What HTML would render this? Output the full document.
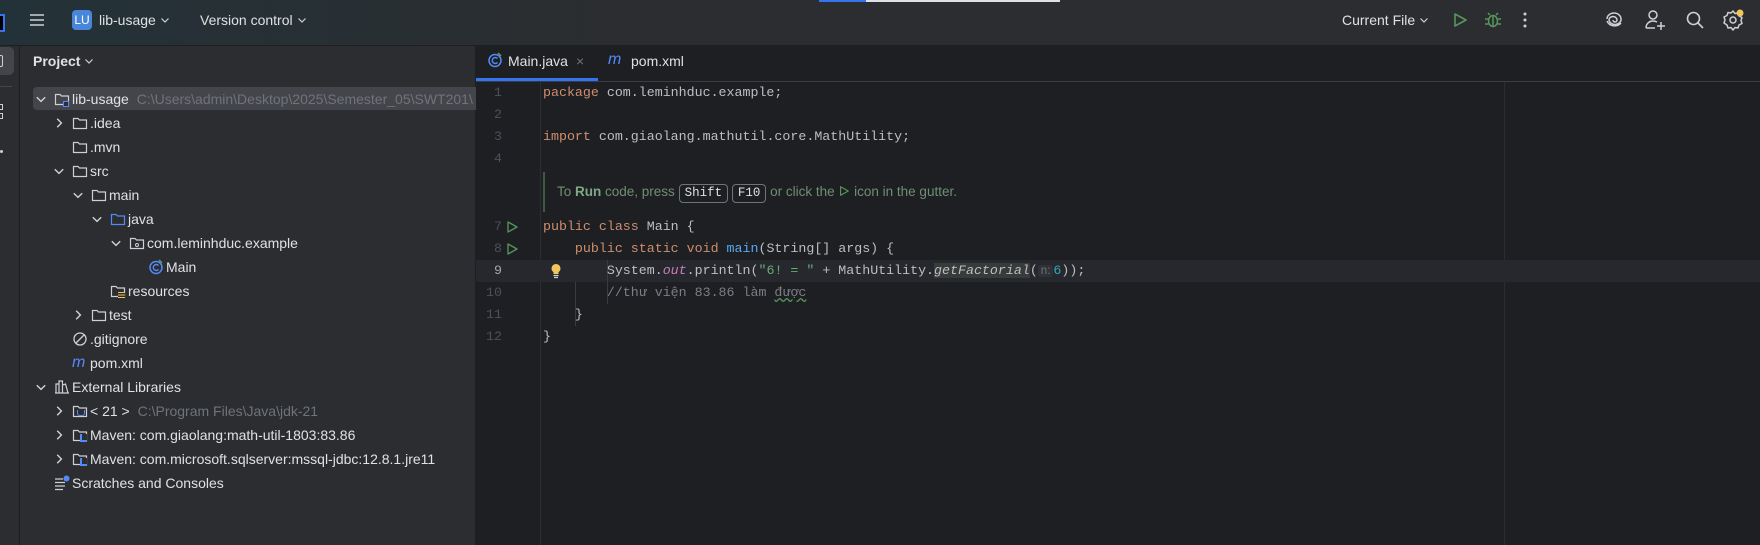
<!DOCTYPE html>
<html><head><meta charset="utf-8">
<style>
*{margin:0;padding:0;box-sizing:border-box}
body{width:1760px;height:545px;overflow:hidden;background:#1e1f22;font-family:"Liberation Sans",sans-serif;color:#dfe1e5;position:relative}
.abs{position:absolute}
.title{left:0;top:0;width:1760px;height:46px;background:linear-gradient(90deg,#233238 0%,#2b2d30 35%,#2b2d30 100%);border-bottom:1px solid #1e1f22}
.ui{font-size:14px;white-space:nowrap}
.stripe{left:0;top:46px;width:20px;height:499px;background:#2b2d30;border-right:1px solid #1e1f22}
.panel{left:20px;top:46px;width:456px;height:499px;background:#2b2d30;border-right:1px solid #1e1f22}
.row{position:absolute;height:24px;line-height:24px;font-size:14px;color:#dfe1e5;white-space:nowrap}
.gray{color:#6f737a}
.code{font-family:"Liberation Mono",monospace;font-size:13.3px;white-space:pre;color:#bcbec4;position:absolute;left:543px;height:22px;line-height:22px}
.ln{font-family:"Liberation Mono",monospace;font-size:13.3px;color:#4b5059;position:absolute;width:40px;text-align:right;left:462px;height:22px;line-height:22px}
.k{color:#cf8e6d}.s{color:#6aab73}.n{color:#2aacb8}.m{color:#56a8f5}.p{color:#c77dbb;font-style:italic}.c{color:#7a7e85}
.key{display:inline-block;border:1px solid #6f737a;border-radius:4px;padding:0 5px;line-height:17px;color:#dfe1e5;font-family:"Liberation Mono",monospace;font-size:12.5px}
.dd{display:inline-block;width:10px;height:10px;margin-left:4px;vertical-align:0}
</style></head><body>
<svg width="0" height="0" style="position:absolute"><defs>
<symbol id="fold" viewBox="0 0 16 16"><path d="M1.5 3.5h4.5l1.5 1.5h7v8.5h-13z" fill="none" stroke="#ced0d6" stroke-width="1.2"/></symbol>
<symbol id="foldb" viewBox="0 0 16 16"><path d="M1.5 3.5h4.5l1.5 1.5h7v8.5h-13z" fill="none" stroke="#548af7" stroke-width="1.2"/></symbol>
<symbol id="down" viewBox="0 0 10 10"><path d="M1.5 3.5l3.5 3.5 3.5-3.5" fill="none" stroke="#ced0d6" stroke-width="1.2"/></symbol>
<symbol id="right" viewBox="0 0 10 10"><path d="M3.5 1.5l3.5 3.5-3.5 3.5" fill="none" stroke="#ced0d6" stroke-width="1.2"/></symbol>
<symbol id="cls" viewBox="0 0 16 16"><circle cx="8" cy="8.5" r="6" fill="none" stroke="#548af7" stroke-width="1.5"/><path d="M10.5 6.5a3 3 0 1 0 0 4" fill="none" stroke="#548af7" stroke-width="1.4"/><path d="M11 1l3 3" stroke="#57965c" stroke-width="1.6"/></symbol>
<symbol id="run" viewBox="0 0 14 14"><path d="M3 2l9 5-9 5z" fill="none" stroke="#57965c" stroke-width="1.3" stroke-linejoin="round"/></symbol>
</defs></svg>
<div class="abs title"></div>
<div class="abs" style="left:819px;top:0;width:47px;height:2px;background:#3574f0"></div>
<div class="abs" style="left:866px;top:0;width:194px;height:2px;background:#dfe1e5"></div>
<div class="abs" style="left:0;top:14px;width:5px;height:18px;border:2px solid #3574f0;border-left:none;background:#000"></div>
<svg class="abs" style="left:29px;top:12px" width="16" height="16" viewBox="0 0 16 16"><path d="M1 3h14M1 8h14M1 13h14" stroke="#ced0d6" stroke-width="1.5"/></svg>
<div class="abs" style="left:72px;top:10px;width:20px;height:20px;border-radius:4px;background:#4a86d8;color:#fff;font-size:12px;line-height:20px;text-align:center">LU</div>
<div class="abs ui" style="left:99px;top:9px;line-height:22px">lib-usage<svg class="dd"><use href="#down"/></svg></div>
<div class="abs ui" style="left:200px;top:9px;line-height:22px">Version control<svg class="dd"><use href="#down"/></svg></div>
<div class="abs ui" style="left:1342px;top:9px;line-height:22px">Current File<svg class="dd"><use href="#down"/></svg></div>
<svg class="abs" style="left:1451px;top:11px" width="18" height="18" viewBox="0 0 18 18"><path d="M4 3l11 6-11 6z" fill="none" stroke="#57965c" stroke-width="1.6" stroke-linejoin="round"/></svg>
<svg class="abs" style="left:1484px;top:10px" width="18" height="20" viewBox="0 0 18 20"><ellipse cx="9" cy="11" rx="4.5" ry="5.5" fill="none" stroke="#57965c" stroke-width="1.5"/><path d="M6 5l-2-2M12 5l2-2M1 9h3.5M13.5 9H17M1 14h3.5M13.5 14H17M9 6v10" stroke="#57965c" stroke-width="1.5"/></svg>
<svg class="abs" style="left:1523px;top:11px" width="4" height="18"><circle cx="2" cy="3" r="1.5" fill="#ced0d6"/><circle cx="2" cy="9" r="1.5" fill="#ced0d6"/><circle cx="2" cy="15" r="1.5" fill="#ced0d6"/></svg>
<svg class="abs" style="left:1604px;top:10px" width="20" height="20" viewBox="0 0 20 20"><path d="M3 9a7 6 0 0 1 14 0a6 5 0 0 1-12 1a4 3.5 0 0 1 8 0a2 2 0 0 1-4 0" fill="none" stroke="#ced0d6" stroke-width="1.5"/><path d="M3 11a8 7 0 0 0 14 2" fill="none" stroke="#ced0d6" stroke-width="1.5"/></svg>
<svg class="abs" style="left:1644px;top:9px" width="22" height="22" viewBox="0 0 22 22"><circle cx="9" cy="6" r="4" fill="none" stroke="#ced0d6" stroke-width="1.5"/><path d="M2 19c0-4 3-7 7-7 2 0 3 .5 4 1" fill="none" stroke="#ced0d6" stroke-width="1.5"/><path d="M2 19h9M17 13v8M13 17h8" stroke="#ced0d6" stroke-width="1.5"/></svg>
<svg class="abs" style="left:1685px;top:10px" width="20" height="20" viewBox="0 0 20 20"><circle cx="8.5" cy="8.5" r="6" fill="none" stroke="#ced0d6" stroke-width="1.6"/><path d="M13 13l5 5" stroke="#ced0d6" stroke-width="1.6"/></svg>
<svg class="abs" style="left:1722px;top:9px" width="22" height="22" viewBox="0 0 22 22"><path d="M11 2l2 2.5 3-.5 1 3 3 1.5-1 3 1 3-3 1.5-1 3-3-.5-2 2.5-2-2.5-3 .5-1-3L2 14l1-3-1-3 3-1.5 1-3 3 .5z" fill="none" stroke="#ced0d6" stroke-width="1.5" stroke-linejoin="round"/><circle cx="11" cy="11" r="3" fill="none" stroke="#ced0d6" stroke-width="1.5"/><circle cx="18" cy="4" r="3.5" fill="#f2c55c"/></svg>

<div class="abs stripe"></div>
<div class="abs" style="left:-6px;top:47px;width:20px;height:28px;background:#43454a;border-radius:5px"></div>
<div class="abs" style="left:-5px;top:55px;width:8px;height:12px;border:1.5px solid #ced0d6;border-radius:2px"></div>
<div class="abs" style="left:0;top:86px;width:12px;height:1px;background:#43454a"></div>
<div class="abs" style="left:-4px;top:104px;width:7px;height:6px;border:1.5px solid #ced0d6"></div>
<div class="abs" style="left:-4px;top:113px;width:7px;height:6px;border:1.5px solid #ced0d6"></div>
<div class="abs" style="left:0;top:150px;width:3px;height:3px;background:#ced0d6;border-radius:50%"></div>

<div class="abs panel"></div>
<div class="abs ui" style="left:33px;top:50px;line-height:22px;font-weight:bold;color:#dfe1e5">Project<svg class="dd"><use href="#down"/></svg></div>
<div class="abs" style="left:33px;top:87px;width:443px;height:23px;background:#43454a;border-radius:4px 0 0 4px"></div>

<div style="position:absolute;left:0;top:0">
<svg class="abs" style="left:35px;top:93px" width="12" height="12"><use href="#down"/></svg>
<svg class="abs" style="left:54px;top:91px" width="16" height="16"><use href="#fold"/></svg>
<div class="abs" style="left:63px;top:101px;width:6px;height:6px;border:1.3px solid #548af7;background:#2b2d30"></div>
<div class="row" style="left:72px;top:87px">lib-usage <span class="gray" style="margin-left:4px">C:\Users\admin\Desktop\2025\Semester_05\SWT201\</span></div>

<svg class="abs" style="left:53px;top:117px" width="12" height="12"><use href="#right"/></svg>
<svg class="abs" style="left:72px;top:115px" width="16" height="16"><use href="#fold"/></svg>
<div class="row" style="left:90px;top:111px">.idea</div>

<svg class="abs" style="left:72px;top:139px" width="16" height="16"><use href="#fold"/></svg>
<div class="row" style="left:90px;top:135px">.mvn</div>

<svg class="abs" style="left:53px;top:165px" width="12" height="12"><use href="#down"/></svg>
<svg class="abs" style="left:72px;top:163px" width="16" height="16"><use href="#fold"/></svg>
<div class="row" style="left:90px;top:159px">src</div>

<svg class="abs" style="left:72px;top:189px" width="12" height="12"><use href="#down"/></svg>
<svg class="abs" style="left:91px;top:187px" width="16" height="16"><use href="#fold"/></svg>
<div class="row" style="left:109px;top:183px">main</div>

<svg class="abs" style="left:91px;top:213px" width="12" height="12"><use href="#down"/></svg>
<svg class="abs" style="left:110px;top:211px" width="16" height="16"><use href="#foldb"/></svg>
<div class="row" style="left:128px;top:207px">java</div>

<svg class="abs" style="left:110px;top:237px" width="12" height="12"><use href="#down"/></svg>
<svg class="abs" style="left:129px;top:235px" width="16" height="16"><use href="#fold"/></svg>
<div class="abs" style="left:135px;top:243px;width:4px;height:4px;border:1px solid #ced0d6;border-radius:50%"></div>
<div class="row" style="left:147px;top:231px">com.leminhduc.example</div>

<svg class="abs" style="left:148px;top:259px" width="16" height="16"><use href="#cls"/></svg>
<div class="row" style="left:166px;top:255px">Main</div>

<svg class="abs" style="left:110px;top:283px" width="16" height="16"><use href="#fold"/></svg>
<div class="abs" style="left:118px;top:292px;width:7px;height:6px;border-top:1.5px solid #f2c55c;border-bottom:1.5px solid #f2c55c;background:linear-gradient(#2b2d30 35%,#f2c55c 35%,#f2c55c 60%,#2b2d30 60%)"></div>
<div class="row" style="left:128px;top:279px">resources</div>

<svg class="abs" style="left:72px;top:309px" width="12" height="12"><use href="#right"/></svg>
<svg class="abs" style="left:91px;top:307px" width="16" height="16"><use href="#fold"/></svg>
<div class="row" style="left:109px;top:303px">test</div>

<svg class="abs" style="left:72px;top:331px" width="16" height="16" viewBox="0 0 16 16"><circle cx="8" cy="8" r="6" fill="none" stroke="#ced0d6" stroke-width="1.3"/><path d="M4 12l8-8" stroke="#ced0d6" stroke-width="1.3"/></svg>
<div class="row" style="left:90px;top:327px">.gitignore</div>

<div class="row" style="left:72px;top:351px;color:#548af7;font-style:italic;font-size:16px">m</div>
<div class="row" style="left:90px;top:351px">pom.xml</div>

<svg class="abs" style="left:35px;top:381px" width="12" height="12"><use href="#down"/></svg>
<svg class="abs" style="left:54px;top:379px" width="16" height="16" viewBox="0 0 16 16"><path d="M2 14V5h3v9M5 14V2h3.5v12M8.5 14V6l3-1 2.5 9zM1 14h14" fill="none" stroke="#ced0d6" stroke-width="1.2"/></svg>
<div class="row" style="left:72px;top:375px">External Libraries</div>

<svg class="abs" style="left:53px;top:405px" width="12" height="12"><use href="#right"/></svg>
<svg class="abs" style="left:72px;top:403px" width="16" height="16"><use href="#fold"/></svg>
<div class="abs" style="left:77px;top:410px;width:8px;height:6px;border:1.4px solid #548af7;border-top:none;border-radius:0 0 3px 3px;background:#2b2d30"></div>
<div class="row" style="left:90px;top:399px">&lt; 21 &gt; <span class="gray" style="margin-left:4px">C:\Program Files\Java\jdk-21</span></div>

<svg class="abs" style="left:53px;top:429px" width="12" height="12"><use href="#right"/></svg>
<svg class="abs" style="left:72px;top:427px" width="16" height="16"><use href="#fold"/></svg>
<div class="abs" style="left:80px;top:434px;width:7px;height:8px;background:#2b2d30;border-bottom:2px solid #548af7;border-left:2px solid #548af7"></div>
<div class="row" style="left:90px;top:423px">Maven: com.giaolang:math-util-1803:83.86</div>

<svg class="abs" style="left:53px;top:453px" width="12" height="12"><use href="#right"/></svg>
<svg class="abs" style="left:72px;top:451px" width="16" height="16"><use href="#fold"/></svg>
<div class="abs" style="left:80px;top:458px;width:7px;height:8px;background:#2b2d30;border-bottom:2px solid #548af7;border-left:2px solid #548af7"></div>
<div class="row" style="left:90px;top:447px">Maven: com.microsoft.sqlserver:mssql-jdbc:12.8.1.jre11</div>

<svg class="abs" style="left:54px;top:475px" width="16" height="16" viewBox="0 0 16 16"><path d="M1 4h8M1 7.5h10M1 11h10M1 14.5h8" stroke="#ced0d6" stroke-width="1.2"/><circle cx="12.5" cy="3.5" r="3" fill="#548af7"/></svg>
<div class="row" style="left:72px;top:471px">Scratches and Consoles</div>
</div>

<div class="abs" style="left:476px;top:46px;width:1284px;height:36px;background:#1e1f22;border-bottom:1px solid #393b40"></div>
<svg class="abs" style="left:487px;top:52px" width="16" height="16"><use href="#cls"/></svg>
<div class="abs ui" style="left:508px;top:50px;line-height:22px">Main.java</div>
<div class="abs" style="left:576px;top:50px;line-height:22px;color:#6f737a;font-size:14px">×</div>
<div class="abs" style="left:476px;top:78px;width:122px;height:3px;background:#3574f0"></div>
<div class="abs" style="left:608px;top:49px;line-height:22px;color:#548af7;font-style:italic;font-size:16px">m</div>
<div class="abs ui" style="left:631px;top:50px;line-height:22px">pom.xml</div>

<div class="abs" style="left:540px;top:82px;width:1px;height:463px;background:#2b2d30"></div>
<div class="abs" style="left:1504px;top:82px;width:1px;height:463px;background:#2b2d30"></div>
<div class="abs" style="left:476px;top:260px;width:1284px;height:22px;background:#26282e"></div>

<div class="ln" style="top:82px">1</div><div class="ln" style="top:104px">2</div><div class="ln" style="top:126px">3</div><div class="ln" style="top:148px">4</div>
<div class="ln" style="top:216px">7</div><div class="ln" style="top:238px">8</div><div class="ln" style="top:260px;color:#a1a3ab">9</div>
<div class="ln" style="top:282px">10</div><div class="ln" style="top:304px">11</div><div class="ln" style="top:326px">12</div>
<svg class="abs" style="left:505px;top:220px" width="14" height="14"><use href="#run"/></svg>
<svg class="abs" style="left:505px;top:242px" width="14" height="14"><use href="#run"/></svg>
<svg class="abs" style="left:550px;top:263px" width="12" height="16" viewBox="0 0 12 16"><path d="M6 1a4.5 4.5 0 0 0-2.5 8.2V11h5V9.2A4.5 4.5 0 0 0 6 1z" fill="#f2c55c"/><path d="M3.5 12.5h5M4 14.5h4" stroke="#ced0d6" stroke-width="1.2"/></svg>
<div class="abs" style="left:575px;top:282px;width:1px;height:44px;background:#393b40"></div>
<div class="abs" style="left:607px;top:260px;width:1px;height:44px;background:#393b40"></div>

<div class="code" style="top:82px"><span class="k">package</span> com.leminhduc.example;</div>
<div class="code" style="top:126px"><span class="k">import</span> com.giaolang.mathutil.core.MathUtility;</div>
<div class="abs" style="left:543px;top:172px;width:2px;height:40px;background:#3d5a43"></div>
<div class="abs" style="left:557px;top:181px;font-size:13.5px;color:#6f8f73;white-space:nowrap;line-height:22px">To <b style="color:#7fa883">Run</b> code, press <span class="key">Shift</span> <span class="key">F10</span> or click the <svg width="12" height="12" style="vertical-align:-1px"><use href="#run"/></svg> icon in the gutter.</div>
<div class="code" style="top:216px"><span class="k">public class</span> Main {</div>
<div class="code" style="top:238px">    <span class="k">public static void</span> <span class="m">main</span>(String[] args) {</div>
<div class="code" style="top:260px">        System.<span class="p">out</span>.println(<span class="s">"6! = "</span> + MathUtility.<span style="font-style:italic;background:#373b39">getFactorial</span>(<span style="background:#2f3136;color:#6f737a;border-radius:3px;font-family:'Liberation Sans';font-size:11.5px;padding:0 3px">n:</span><span class="n">6</span>));</div>
<div class="code c" style="top:282px">        //thư viện 83.86 làm <span style="text-decoration:underline wavy #57965c">được</span></div>
<div class="code" style="top:304px">    }</div>
<div class="code" style="top:326px">}</div>
</body></html>
